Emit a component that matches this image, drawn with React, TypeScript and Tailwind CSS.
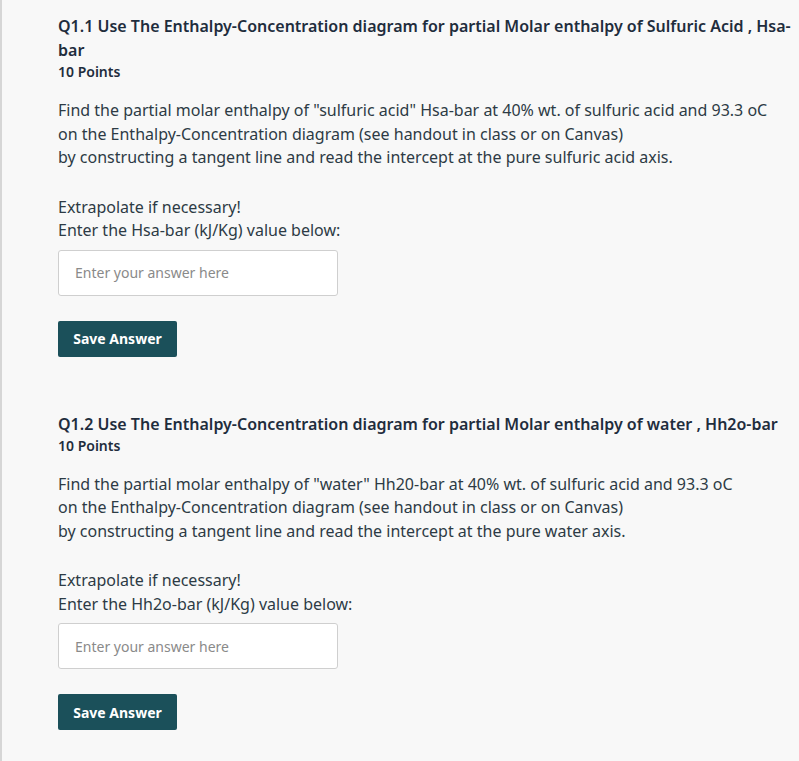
import React from "react";

function Question(props: { title: string; body: string[]; label: string }) {
  return (
    <div className="pb-[45px]">
      <h2 className="text-[16px] leading-[24px] font-semibold text-[#1f2d3d]">{props.title}</h2>
      <div className="text-[14px] leading-[20px] font-semibold text-[#1f2d3d]">10 Points</div>
      <div className="mt-[17px] text-[16px] leading-[23.5px] text-[#2d3b45]">
        {props.body.map((l, i) => (
          <div key={i}>{l}</div>
        ))}
        <div className="h-[26px]" />
        <div>Extrapolate if necessary!</div>
        <div>{props.label}</div>
      </div>
      <input
        className="mt-[7px] block w-[280px] h-[46px] bg-white border border-[#cfcfcf] rounded-[3px] px-[16px] text-[14px] text-[#2d3b45] placeholder:text-[#8a8a8a] outline-none"
        placeholder="Enter your answer here"
      />
      <button className="mt-[25px] block w-[119px] h-[36px] bg-[#1b505a] text-white text-[14px] font-bold rounded-[2px]">
        Save Answer
      </button>
    </div>
  );
}

export default function App() {
  return (
    <div
      className="min-h-[761px] bg-[#f8f8f8] border-l-2 border-[#d6d6d6] pl-[56px] pt-[14px]"
      style={{ fontFamily: '"Noto Sans", "Open Sans", sans-serif' }}
    >
      <Question
        title="Q1.1 Use The Enthalpy-Concentration diagram for partial Molar enthalpy of Sulfuric Acid , Hsa-bar"
        body={[
          'Find the partial molar enthalpy of "sulfuric acid" Hsa-bar at 40% wt. of sulfuric acid and 93.3 oC',
          "on the Enthalpy-Concentration diagram (see handout in class or on Canvas)",
          "by constructing a tangent line and read the intercept at the pure sulfuric acid axis.",
        ]}
        label="Enter the Hsa-bar (kJ/Kg) value below:"
      />
      <div className="h-[10px]" />
      <Question
        title="Q1.2 Use The Enthalpy-Concentration diagram for partial Molar enthalpy of water , Hh2o-bar"
        body={[
          'Find the partial molar enthalpy of "water" Hh20-bar at 40% wt. of sulfuric acid and 93.3 oC',
          "on the Enthalpy-Concentration diagram (see handout in class or on Canvas)",
          "by constructing a tangent line and read the intercept at the pure water axis.",
        ]}
        label="Enter the Hh2o-bar (kJ/Kg) value below:"
      />
    </div>
  );
}
